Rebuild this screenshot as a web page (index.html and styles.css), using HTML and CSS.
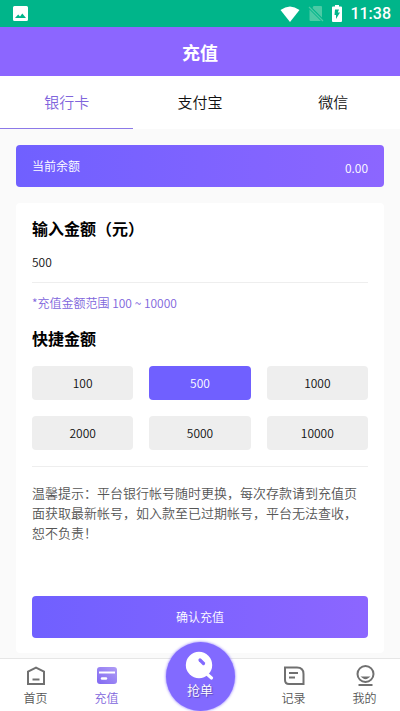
FILE: index.html
```html
<!DOCTYPE html>
<html lang="zh-CN">
<head>
<meta charset="utf-8">
<meta name="viewport" content="width=device-width, initial-scale=1">
<title>充值</title>
<link rel="stylesheet" href="styles.css">
</head>
<body>
<div class="status">
  <svg class="status-picture" width="15" height="15" viewBox="0 0 15 15" aria-hidden="true"><path fill="#fff" fill-rule="evenodd" d="M1.500 0h12Q15 0 15 1.500v12Q15 15 13.500 15h-12Q0 15 0 13.500v-12Q0 0 1.500 0zM2 12h11L9.300 7.500 7 10.600 5.200 8.600z"/></svg>
  <div class="status-right">
    <svg width="20" height="16" viewBox="0 0 20 16" aria-hidden="true"><path fill="#fff" d="M10 16L.5 4Q10-3 19.500 4z"/></svg>
    <svg width="16" height="17" viewBox="0 0 16 17" aria-hidden="true"><path fill="#4bcaa5" d="M5.500 1H13q1 0 1 1v10.500L4.500 3zM1.500 4.500L13 16H2.500q-1 0-1-1z"/><path d="M1 2l14 14" stroke="#4bcaa5" stroke-width="1.300"/></svg>
    <svg width="10" height="17" viewBox="0 0 10 17" aria-hidden="true"><path fill="#fff" d="M3 0h4v1.500h2q1 0 1 1V16q0 1-1 1H1q-1 0-1-1V2.500q0-1 1-1h2z"/><path fill="#00b58a" d="M3 4.500h4L5.800 7.500H8L4 14V10H2.500z"/></svg>
    <span class="clock">11:38</span>
  </div>
</div>
<header class="header"><h1>充值</h1></header>
<nav class="tabs" aria-label="支付方式">
  <button type="button" class="tab tab-active">银行卡</button>
  <button type="button" class="tab">支付宝</button>
  <button type="button" class="tab">微信</button>
</nav>
<main class="main">
  <section class="balance"><span>当前余额</span><span class="balance-value">0.00</span></section>
  <form class="card">
    <label class="heading" for="amount">输入金额（元）</label>
    <input class="amount" id="amount" type="text" inputmode="numeric" value="500">
    <p class="hint">*充值金额范围 100 ~ 10000</p>
    <h2 class="heading">快捷金额</h2>
    <div class="quick">
      <button type="button" class="option">100</button>
      <button type="button" class="option option-active">500</button>
      <button type="button" class="option">1000</button>
      <button type="button" class="option">2000</button>
      <button type="button" class="option">5000</button>
      <button type="button" class="option">10000</button>
    </div>
    <p class="notice">温馨提示：平台银行帐号随时更换，每次存款请到充值页面获取最新帐号，如入款至已过期帐号，平台无法查收，恕不负责！</p>
    <button type="submit" class="submit">确认充值</button>
  </form>
</main>
<nav class="dock" aria-label="主导航">
  <a class="dock-item" href="#home">
    <svg width="22" height="22" viewBox="0 0 22 22" fill="none" stroke="#707070" stroke-width="2" aria-hidden="true"><path d="M3 19V6.500L11 2.500l8 4V19z"/><path d="M7.500 14.500h7"/></svg>
    <span>首页</span>
  </a>
  <a class="dock-item dock-active" href="#recharge">
    <svg width="22" height="22" viewBox="0 0 22 22" aria-hidden="true"><defs><linearGradient id="cardfill" x1="1" y1="0" x2="0" y2="1"><stop stop-color="#b09df5"/><stop offset="1" stop-color="#8068f2"/></linearGradient></defs><rect x="1" y="2" width="20" height="17" rx="3" fill="url(#cardfill)"/><path d="M3 7.500h16" stroke="#fff" stroke-width="2"/><path d="M6 13.500h4" stroke="#fff" stroke-width="2.400" stroke-linecap="round"/></svg>
    <span>充值</span>
  </a>
  <a class="dock-center" href="#grab">
    <svg width="30" height="30" viewBox="0 0 30 30" aria-hidden="true"><circle cx="14" cy="14" r="13.200" fill="#fff"/><path d="M22.500 23.500l4 3.500" stroke="#fff" stroke-width="3.200" stroke-linecap="round"/><path d="M15 9l3.500 3.500" stroke="#826aff" stroke-width="3.200" stroke-linecap="round"/></svg>
    <span>抢单</span>
  </a>
  <a class="dock-item" href="#records">
    <svg width="22" height="22" viewBox="0 0 22 22" fill="none" stroke="#707070" stroke-width="2" aria-hidden="true"><path d="M2 2.500h12Q20.500 2.500 20.500 9v10H6Q2 19 2 15z"/><path d="M6 8h9M6 12.500h6"/></svg>
    <span>记录</span>
  </a>
  <a class="dock-item" href="#mine">
    <svg width="22" height="22" viewBox="0 0 22 22" fill="none" stroke="#707070" stroke-width="2" aria-hidden="true"><circle cx="11.500" cy="9" r="8"/><path d="M4.500 20h14"/><path d="M9.500 12.500q2 1.500 4 0z"/></svg>
    <span>我的</span>
  </a>
</nav>
</body>
</html>
```
FILE: styles.css
```css
* { box-sizing: border-box; }
body {
  margin: 0;
  min-height: 100vh;
  display: flex;
  flex-direction: column;
  background: #fafafa;
  color: #111;
  font: 350 12px/18px "Noto Sans CJK SC", sans-serif;
}
button, input { font: inherit; color: inherit; border: 0; padding: 0; background: none; }
h1, h2, p { margin: 0; }
svg { display: block; flex: none; }

.status {
  height: 27px;
  padding: 0 9px 0 13px;
  display: flex;
  align-items: center;
  justify-content: space-between;
  background: #00b58a;
  color: #fff;
}
.status-right { display: flex; align-items: center; gap: 8px; }
.clock { font: 500 16px/20px Roboto, sans-serif; }

.header {
  height: 49px;
  display: flex;
  align-items: center;
  justify-content: center;
  background: #8c66ff;
  color: #fff;
}
.header h1 { font-size: 18px; line-height: 26px; }

.tabs { display: grid; grid-template-columns: repeat(3, 1fr); background: #fff; }
.tab { height: 53px; font-size: 15px; border-bottom: 1px solid transparent; }
.tab-active { color: #8065dc; border-bottom-color: #8c79e8; }

.main { flex: 1; display: flex; flex-direction: column; gap: 16px; padding: 16px 16px 5px; }
.balance {
  height: 42px;
  padding: 0 16px;
  display: flex;
  align-items: center;
  justify-content: space-between;
  border-radius: 4px;
  background: linear-gradient(90deg, #7060ff, #8c66ff);
  color: #fff;
}
.balance-value { padding-top: 4px; }

.card {
  flex: 1;
  display: flex;
  flex-direction: column;
  padding: 13px 16px 15px;
  border-radius: 4px;
  background: #fff;
}
.heading { font-size: 16px; line-height: 24px; font-weight: 700; color: #000; }
.amount {
  width: 100%;
  height: 43px;
  border-bottom: 1px solid #eee;
  border-radius: 0;
  outline: 0;
}
.hint { padding: 11px 0 14px; color: #8065dc; }
.quick {
  display: grid;
  grid-template-columns: repeat(3, 1fr);
  gap: 16px;
  padding: 16px 0;
  border-bottom: 1px solid #eee;
}
.option { height: 34px; border-radius: 4px; background: #eee; }
.option-active { background: #7060ff; color: #fff; }
.notice { padding: 16px 0; font-size: 13px; line-height: 20px; color: #555; }
.submit {
  height: 42px;
  margin-top: auto;
  border-radius: 4px;
  background: linear-gradient(90deg, #7060ff, #8c66ff);
  color: #fff;
}

.dock {
  position: sticky;
  bottom: 0;
  height: 53px;
  display: grid;
  grid-template-columns: 1fr 1fr 116px 1fr 1fr;
  grid-template-rows: 100%;
  background: #fff;
  border-top: 1px solid #e6e6e6;
}
.dock a { text-decoration: none; }
.dock-item {
  display: flex;
  flex-direction: column;
  align-items: center;
  gap: 2px;
  padding-top: 6px;
  color: #555;
}
.dock-item.dock-active { color: #8065dc; }
.dock-center {
  justify-self: center;
  align-self: end;
  width: 69px;
  height: 69px;
  padding-top: 9px;
  display: flex;
  flex-direction: column;
  align-items: center;
  border-radius: 50%;
  background: #826aff;
  box-shadow: 0 0 3px #826aff;
  color: #fff;
  font-size: 13px;
  text-shadow: 1px 1px 1px #5a48b8;
}
```
